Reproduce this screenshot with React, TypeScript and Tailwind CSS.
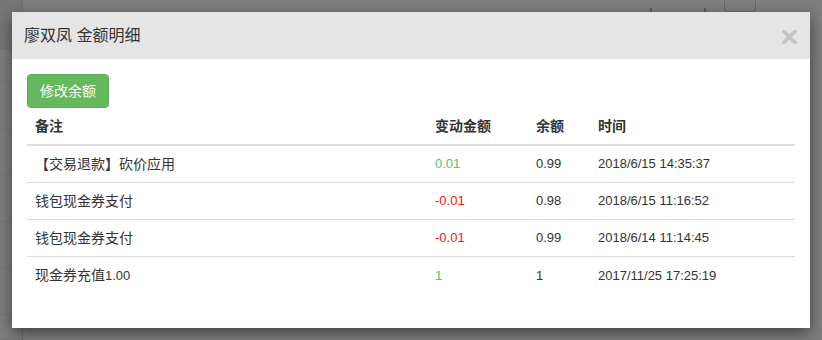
import React from 'react';

interface Record {
    note: string;
    change: string;
    balance: string;
    time: string;
}

const records: Record[] = [
    { note: '【交易退款】砍价应用', change: '0.01', balance: '0.99', time: '2018/6/15 14:35:37' },
    { note: '钱包现金券支付', change: '-0.01', balance: '0.98', time: '2018/6/15 11:16:52' },
    { note: '钱包现金券支付', change: '-0.01', balance: '0.99', time: '2018/6/14 11:14:45' },
    { note: '现金券充值1.00', change: '1', balance: '1', time: '2017/11/25 17:25:19' },
];

const bgRows = [50, 32, 48, 45, 47, 46, 47, 25];

// CJK in the reference sits at 14px while the latin digits are narrower, so split them
const renderNote = (note: string) => {
    const m = note.match(/^(.*?)([\d.]+)$/);
    if (!m) return note;
    return (
        <>
            {m[1]}
            <span className="text-[13px]">{m[2]}</span>
        </>
    );
};

const App: React.FC = () => {
    return (
        <div
            className="relative w-[822px] h-[340px] overflow-hidden bg-[#7f7f7f] text-[13px] text-[#333]"
            style={{ fontFamily: '"Liberation Sans", "Noto Sans CJK SC", sans-serif' }}
        >
            {/* page behind the backdrop */}
            <div className="flex h-full">
                <div className="w-[23px] border-r border-[#6f6f6f] flex flex-col">
                    {bgRows.map((h, i) => (
                        <div key={i} className={`border-b border-[#787878] ${i === 0 ? 'bg-[#777]' : ''}`} style={{ height: h }} />
                    ))}
                </div>
                <div className="flex-1 flex justify-end items-start pr-[66px]">
                    <div className="w-[2px] h-[4px] mt-[8px] mr-[52px] bg-[#5a5a5a]" />
                    <div className="w-[2px] h-[4px] mt-[8px] mr-[18px] bg-[#5a5a5a]" />
                    <div className="w-[32px] h-[12px] border border-t-0 border-[#6a6a6a] rounded-b-[3px]" />
                </div>
            </div>

            {/* modal */}
            <div className="absolute left-[12px] top-[12px] w-[798px] bg-white shadow-[0_5px_15px_rgba(0,0,0,0.5)]">
                <div className="h-[47px] bg-[#e5e5e5] flex items-center justify-between pl-[12px] pr-[13px]">
                    <h4 className="text-[16px] text-[#333]">廖双凤 金额明细</h4>
                    <svg width="15" height="14" viewBox="0 0 15 14" className="mt-[2px]">
                        <path d="M2 1.5 L13 12.5 M13 1.5 L2 12.5" stroke="#c4c4c4" strokeWidth="3.6" strokeLinecap="square" />
                    </svg>
                </div>
                <div className="px-[15px] pt-[15px] pb-[34px]">
                    <button className="h-[34px] px-[12px] rounded-[4px] bg-[#66b85c] border border-[#5cae52] text-white text-[14px]">
                        修改余额
                    </button>
                    <table className="w-full border-collapse leading-[20px]">
                        <thead>
                            <tr className="border-b-2 border-[#ddd] text-[14px]">
                                <th className="w-[400px] p-[8px] text-left font-bold">备注</th>
                                <th className="w-[101px] p-[8px] text-left font-bold">变动金额</th>
                                <th className="w-[62px] p-[8px] text-left font-bold">余额</th>
                                <th className="p-[8px] text-left font-bold">时间</th>
                            </tr>
                        </thead>
                        <tbody>
                            {records.map((r, i) => (
                                <tr key={i} className={i > 0 ? 'border-t border-[#ddd]' : ''}>
                                    <td className="p-[8px] text-[14px]">{renderNote(r.note)}</td>
                                    <td className={`p-[8px] ${r.change.startsWith('-') ? 'text-[#ff1010]' : 'text-[#4cc46c]'}`}>{r.change}</td>
                                    <td className="p-[8px]">{r.balance}</td>
                                    <td className="p-[8px]">{r.time}</td>
                                </tr>
                            ))}
                        </tbody>
                    </table>
                </div>
            </div>
        </div>
    );
};

export default App;
